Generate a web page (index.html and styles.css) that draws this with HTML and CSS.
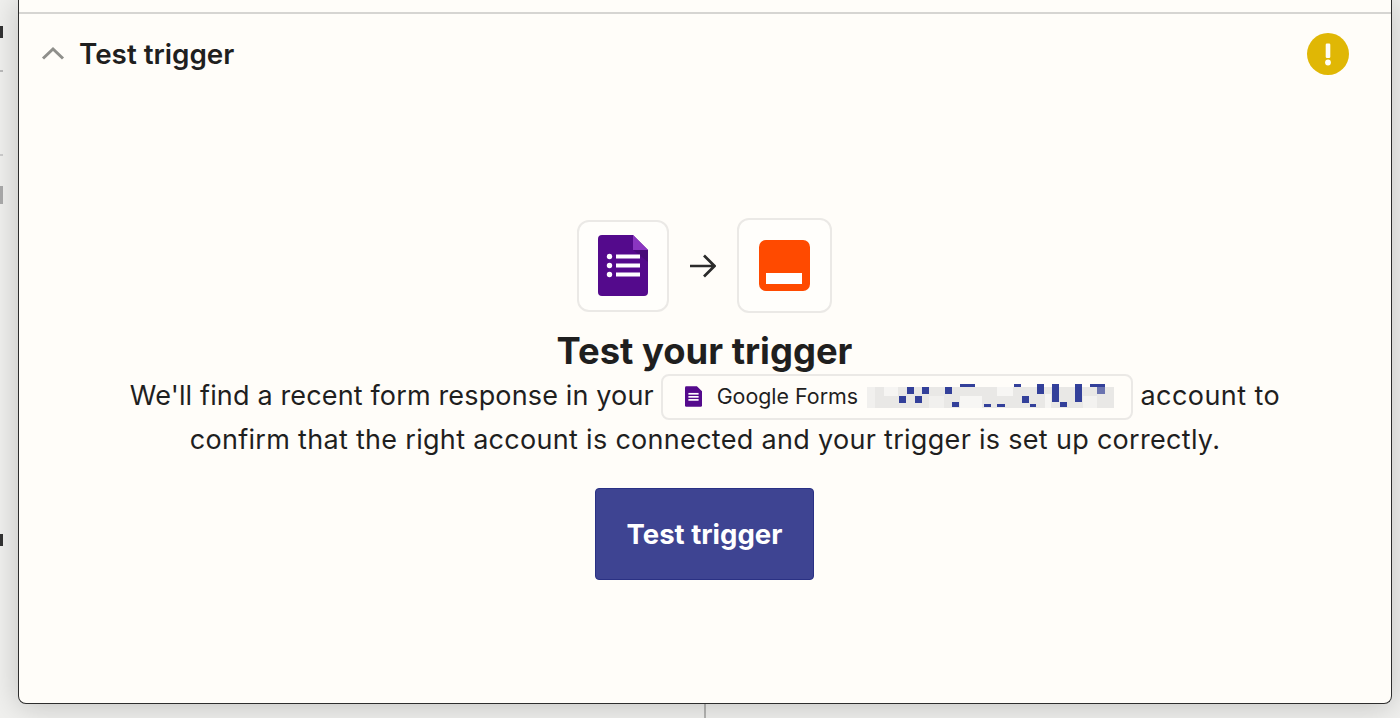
FILE: index.html
```html
<!DOCTYPE html>
<html lang="en">
<head>
  <meta charset="UTF-8">
  <title>Test trigger</title>
  <link rel="stylesheet" href="styles.css">
</head>
<body>
  <div class="peek peek-a"></div>
  <div class="peek peek-b"></div>
  <div class="peek peek-c"></div>
  <div class="peek peek-d"></div>
  <div class="peek peek-e"></div>
  <div class="peek-line"></div>

  <div class="card">
    <div class="card-top"></div>

    <div class="step-head">
      <svg class="chevron" width="24" height="14" viewBox="0 0 24 14">
        <path d="M2 12.5 L12 3 L22 12.5" fill="none" stroke="#8f8f8b" stroke-width="3"/>
      </svg>
      <h2>Test trigger</h2>
      <svg class="alert" width="42" height="42" viewBox="0 0 42 42">
        <circle cx="21" cy="21" r="21" fill="#e0b705"/>
        <rect x="18.7" y="10.5" width="4.6" height="14.5" rx="1.2" fill="#fffefa"/>
        <circle cx="21" cy="29.5" r="2.9" fill="#fffefa"/>
      </svg>
    </div>

    <div class="step-body">
      <div class="apps">
        <div class="tile tile-forms">
          <svg width="50" height="61" viewBox="0 0 50 61">
            <path d="M4 0 H35 L50 15 V57 a4 4 0 0 1 -4 4 H4 a4 4 0 0 1 -4 -4 V4 a4 4 0 0 1 4 -4 Z" fill="#540a8c"/>
            <path d="M35 15 H50 V27 Z" fill="#470a78"/>
            <path d="M35 0 L50 15 H35 Z" fill="#8a35c0"/>
            <circle cx="11.5" cy="21.5" r="2.7" fill="#fff"/>
            <circle cx="11.5" cy="30.5" r="2.7" fill="#fff"/>
            <circle cx="11.5" cy="39.5" r="2.7" fill="#fff"/>
            <rect x="18" y="19.5" width="24" height="4" fill="#fff"/>
            <rect x="18" y="28.5" width="24" height="4" fill="#fff"/>
            <rect x="18" y="37.5" width="24" height="4" fill="#fff"/>
          </svg>
        </div>
        <svg class="arrow" width="26" height="24" viewBox="0 0 26 24">
          <path d="M0 12 H24 M14 1.5 L24.5 12 L14 22.5" fill="none" stroke="#2b2b2b" stroke-width="2.7"/>
        </svg>
        <div class="tile tile-dest">
          <svg width="51" height="51" viewBox="0 0 51 51">
            <rect width="51" height="51" rx="7" fill="#ff4a00"/>
            <rect x="7" y="33" width="36" height="11" fill="#fff"/>
          </svg>
        </div>
      </div>

      <h1>Test your trigger</h1>
      <p class="desc">
        We'll find a recent form response in your
        <span class="pill">
          <svg width="17" height="21" viewBox="0 0 50 61">
            <path d="M4 0 H35 L50 15 V57 a4 4 0 0 1 -4 4 H4 a4 4 0 0 1 -4 -4 V4 a4 4 0 0 1 4 -4 Z" fill="#540a8c"/>
            <rect x="10" y="20" width="30" height="5" fill="#fff"/>
            <rect x="10" y="29" width="30" height="5" fill="#fff"/>
            <rect x="10" y="38" width="30" height="5" fill="#fff"/>
          </svg>
          <span class="pill-name">Google Forms</span>
          <svg class="blur" width="247" height="24" viewBox="0 0 247 24" shape-rendering="crispEdges">
            <rect y="3" width="247" height="21" fill="#e9e8e6"/>
            <rect x="0" y="3" width="8" height="21" fill="#f1f0ee"/>
            <rect x="17" y="3" width="14" height="9" fill="#f6f5f3"/>
            <rect x="62" y="12" width="15" height="12" fill="#f1f0ee"/>
            <rect x="93" y="12" width="22" height="12" fill="#f7f6f4"/>
            <rect x="130" y="3" width="16" height="9" fill="#f7f6f4"/>
            <rect x="178" y="10" width="6" height="14" fill="#f6f5f3"/>
            <rect x="216" y="12" width="14" height="12" fill="#f3f2f0"/>
            <rect x="32" y="12" width="7" height="7" fill="#33409a"/>
            <rect x="40" y="3" width="7" height="7" fill="#33409a"/>
            <rect x="48" y="12" width="7" height="7" fill="#33409a"/>
            <rect x="55" y="3" width="7" height="7" fill="#33409a"/>
            <rect x="78" y="3" width="7" height="7" fill="#33409a"/>
            <rect x="93" y="0" width="15" height="3" fill="#33409a"/>
            <rect x="85" y="18" width="7" height="5" fill="#33409a"/>
            <rect x="117" y="20" width="7" height="3" fill="#33409a"/>
            <rect x="130" y="20" width="8" height="3" fill="#33409a"/>
            <rect x="147" y="0" width="7" height="3" fill="#33409a"/>
            <rect x="155" y="12" width="7" height="7" fill="#33409a"/>
            <rect x="163" y="20" width="6" height="3" fill="#33409a"/>
            <rect x="170" y="0" width="7" height="10" fill="#33409a"/>
            <rect x="185" y="0" width="7" height="18" fill="#33409a"/>
            <rect x="193" y="18" width="7" height="5" fill="#33409a"/>
            <rect x="208" y="0" width="7" height="18" fill="#33409a"/>
            <rect x="223" y="0" width="15" height="3" fill="#33409a"/>
            <rect x="230" y="3" width="8" height="7" fill="#6b74b0"/>
          </svg>
        </span>
        <span class="desc-end">account to</span><br>
        <span class="desc-second">confirm that the right account is connected and your trigger is set up correctly.</span>
      </p>
      <button class="test-btn">Test trigger</button>
    </div>
  </div>
</body>
</html>
```

FILE: styles.css
```css
html, body {
  margin: 0;
  height: 718px;
  overflow: hidden;
}
body {
  position: relative;
  box-sizing: border-box;
  padding: 0 8px 14px 18px;
  background: #f0f0ee;
  font-family: Inter, "Noto Sans", sans-serif;
  color: #1f1f1f;
}
.card {
  position: relative;
  height: 704px;
  box-sizing: border-box;
  background: #fffdf9;
  border: 1.5px solid #2d2d2d;
  border-top: none;
  border-radius: 0 0 8px 8px;
  box-shadow: 0 2px 30px rgba(0,0,0,0.2);
}
.card-top {
  height: 12px;
  border-bottom: 2px solid #d6d5d2;
}
.step-head {
  display: flex;
  align-items: center;
  height: 80px;
  padding: 0 42px 0 22px;
}
.step-head h2 {
  margin: 0 0 0 14px;
  flex: 1;
  font-size: 27.8px;
  font-weight: 600;
}
.chevron {
  margin-bottom: 3px;
}
.step-body {
  display: flex;
  flex-direction: column;
  align-items: center;
  padding-top: 124px;
}
.apps {
  display: flex;
  align-items: center;
  height: 95px;
  margin-right: 2px;
}
.tile {
  display: flex;
  align-items: center;
  justify-content: center;
  box-sizing: border-box;
  background: #fffefb;
  border: 2px solid #ebe9e6;
  border-radius: 12px;
}
.tile-forms {
  width: 92px;
  height: 92px;
}
.tile-dest {
  width: 95px;
  height: 95px;
}
.arrow {
  margin: 0 21px;
}
h1 {
  margin: 15px 1px 0 0;
  font-size: 36.4px;
  line-height: 46px;
  font-weight: 700;
}
.desc {
  margin: 0;
  font-size: 27px;
  line-height: 43.5px;
  letter-spacing: 0.15px;
  text-align: center;
  white-space: nowrap;
}
.desc-end {
  letter-spacing: 0.45px;
}
.desc-second {
  letter-spacing: 0.3px;
}
.pill {
  display: inline-flex;
  align-items: center;
  box-sizing: border-box;
  width: 472px;
  height: 46px;
  margin: -9px 0 -7px -1px;
  padding-left: 22px;
  vertical-align: middle;
  overflow: hidden;
  border: 2px solid #ebe9e6;
  border-radius: 8px;
  font-size: 21.4px;
  letter-spacing: 0;
}
.pill-name {
  margin: 0 9px 0 15px;
}
.blur {
  flex: none;
  margin-bottom: 2px;
}
.test-btn {
  display: block;
  width: 219px;
  height: 92px;
  margin: 27px 1px 0 0;
  background: #3e4492;
  border: 1px solid #2a3184;
  border-radius: 4px;
  color: #fff;
  font-family: inherit;
  font-size: 27.5px;
  font-weight: 700;
}
.peek {
  position: absolute;
  left: 0;
  width: 3px;
}
.peek-a { top: 26px; height: 12px; background: #333; }
.peek-b { top: 70px; height: 2px; background: #bbb; }
.peek-c { top: 154px; height: 2px; background: #ccc; }
.peek-d { top: 186px; height: 18px; background: #aaa; }
.peek-e { top: 534px; height: 12px; background: #333; }
.peek-line {
  position: absolute;
  left: 704px;
  top: 704px;
  width: 2px;
  height: 14px;
  background: #b5b5b3;
}
```
